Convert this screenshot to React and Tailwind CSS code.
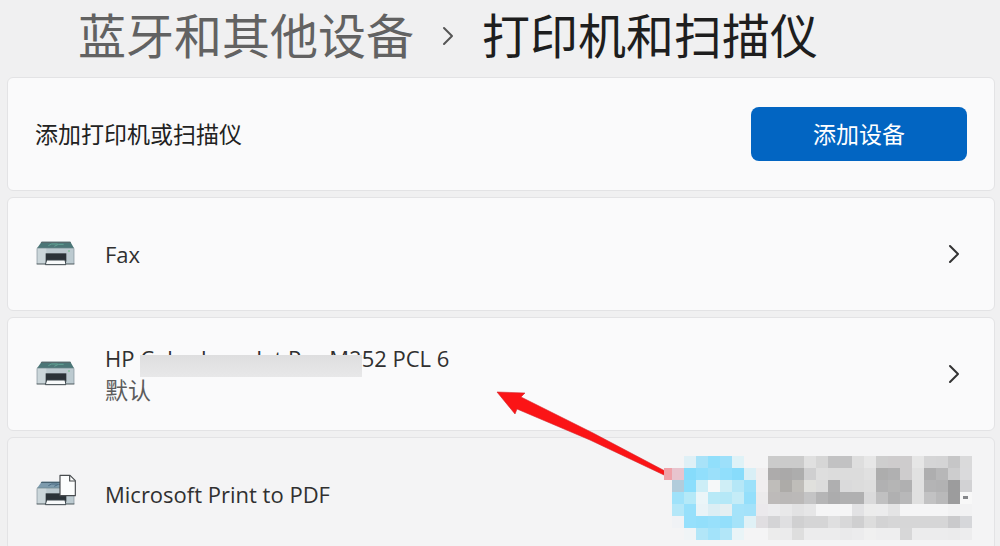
import React from 'react';

const devices = [
  { name: 'Fax' },
  { prefix: 'HP ', masked: 'Color LaserJet Pro M2', name: '52 PCL 6', status: '默认' },
  { name: 'Microsoft Print to PDF', document: true },
];

// 12px mosaic blocks, '' leaves a block empty
const mosaic = [
  ['', '#dff0f6', '#a8e2f8', '#91dffb', '#9de0fa', '#dff2f7', '', '', '#cbcbcb', '#cbcbcb', '#cbcbcb', '#e0e0e0', '#d6d6d6', '#c2c2c3', '#c2c2c3', '#dedede', '#e7e7e7', '#cecece', '#cecccd', '#cecccd', '#e6e6e6', '#d5d5d6', '#d4d4d5', '#c6c6c7', '#dadadb'],
  ['#e8c4ce', '#86dcfb', '#91dffc', '#9be0fa', '#91dffc', '#88dcfb', '#d9eff6', '#f0eeef', '#adabab', '#aaa9a9', '#adadad', '#cfcfd0', '#dedede', '#dcdcdc', '#dcdcdc', '#dcdcdc', '#e0e0e0', '#adadad', '#b0b0b1', '#cecccd', '#e1e1e1', '#aeaeaf', '#b7b7b8', '#cdcdce', '#dadadc'],
  ['#b2ccdb', '#8bdefc', '#cdeef7', '#f6f8f9', '#cfeef6', '#b5e7f7', '#9ce1fa', '#f0eeef', '#bfbdba', '#adaba8', '#bfbdb9', '#e0e0dd', '#dcdcdc', '#afafb0', '#dadadb', '#dcdcdc', '#dedede', '#b1b1b2', '#b5b5b5', '#b0b0b1', '#e0e0e0', '#b4b4b5', '#b2b2b3', '#9c9c9d', '#d2d2d4'],
  ['#9fe2fa', '#b5e9f8', '#ebf5f8', '#b8e9f7', '#b5e8f7', '#c5ecf7', '#94dffb', '#ecebec', '#bdbab9', '#bab8b7', '#bbb9b8', '#c4c4c5', '#b5b5b6', '#acacad', '#b0b0b1', '#b0b0b1', '#dadadb', '#c0c0c1', '#b0b0b1', '#b8b8b9', '#e0e0e0', '#c2c2c3', '#b9b9ba', '#9c9c9d', '#f8f8f8'],
  ['#b4e7f8', '#97e0fb', '#e9f3f7', '#dceef4', '#e5eff2', '#a5e3fa', '#a3e2fa', '#ebe9ec', '#ececee', '#e8e8e9', '#e2e2e3', '#e6e6e7', '#f5f5f6', '#f5f5f6', '#f5f5f6', '#e2e2e4', '#ececec', '#ececed', '#e4e4e5', '#f5f5f6', '#f5f5f6', '#f5f5f6', '#f5f5f6', '#f2f2f3', '#f2f2f3'],
  ['#f0f2f5', '#96e0fc', '#93dffb', '#98e0fb', '#93dffb', '#a5e3f9', '#e0f1f6', '#e0dee1', '#d4d4d6', '#dfdfe1', '#d0d0d1', '#d5d5d6', '#d5d5d6', '#dfdfe0', '#d8d8d9', '#cfcfd0', '#dddddd', '#d3d3d4', '#d6d6d7', '#d6d6d7', '#d6d6d7', '#d6d6d7', '#d6d6d7', '#cacacc', '#d6d7da'],
  ['', '#f0f4f6', '#b2e6f8', '#a3e3fa', '#b2e6f8', '#e9f4f7', '', '', '#ececec', '#ebebec', '#dedede', '#ececed', '#ececed', '#ececed', '#eaeaeb', '#ececed', '#f0f0f0', '#eeeeef', '#eeeeef', '#d7d7d8', '#ececed', '#ececed', '#ececed', '#ebebec', '#ededee'],
];

const Chevron = ({ className }) => (
  <svg
    viewBox="0 0 12 20"
    className={className}
    fill="none"
    stroke="currentColor"
    strokeWidth="2"
    strokeLinecap="round"
    strokeLinejoin="round"
    aria-hidden="true"
  >
    <path d="M2 2 L10 10 L2 18" />
  </svg>
);

const PrinterIcon = ({ document }) => (
  <svg viewBox="45 38 120 102" className="mb-2 h-[34px] w-10 shrink-0" aria-hidden="true">
    <path d="M62 64 H148 L159 84 H48 Z" fill={document ? '#7d9bad' : '#4b7677'} />
    <path d="M62 64 H148 L150 68 H59 Z" fill={document ? '#46606f' : '#56686b'} />
    <path
      d="M82 76 L92 71 H110 M100 78 L112 72 H128"
      stroke={document ? '#4a6b82' : '#62a294'}
      strokeWidth="3"
      fill="none"
    />
    <path d="M48 83 H159 V131 H48 Z" fill="#bccad0" />
    <path d="M48 83 H76 V131 H48 Z" fill="#cbd6da" />
    <path d="M48 83 H159" stroke="#6b828a" strokeWidth="2" />
    {!document && <circle cx="144" cy="92" r="2" fill="#4fbd66" />}
    <path d="M48 84 V131 M159 84 V131" stroke="#7f9097" strokeWidth="2" />
    <path d="M47 131 H74 M136 131 H160" stroke="#4c585d" strokeWidth="3" />
    <path d="M74 99 H136 V124 H74 Z" fill="#2b3338" />
    <path d="M77 119 H132 L135 133 H73 Z" fill="#f8fafb" stroke="#394348" strokeWidth="3" />
    {document && (
      <>
        <path
          d="M117 45 H147 L163 61 V106 H117 Z"
          fill="#fcfdfd"
          stroke="#484c4f"
          strokeWidth="3.5"
          strokeLinejoin="round"
        />
        <path d="M146 46 V62 H162" fill="none" stroke="#484c4f" strokeWidth="3.5" />
      </>
    )}
  </svg>
);

const DeviceRow = ({ device }) => (
  <li>
    <button
      type="button"
      className={`flex min-h-[114px] w-full items-center rounded-md border border-[#e3e3e5] px-7 text-left ${
        device.document ? 'bg-[#f4f4f5]' : 'bg-[#fafafb]'
      }`}
    >
      <PrinterIcon document={device.document} />
      <span className="ml-[29px] flex-1">
        <span className="block text-[22px] leading-8 text-[#303030]">
          {device.prefix}
          {device.masked && (
            <span className="relative">
              {device.masked}
              <span className="absolute inset-x-0 top-3 -bottom-1 bg-linear-to-b from-[#dededf] to-[#e8e8e9]" />
            </span>
          )}
          {device.name}
        </span>
        {device.status && (
          <span className="block text-[23px] leading-8 text-[#5c5c5c]">{device.status}</span>
        )}
      </span>
      {!device.document && (
        <span className="flex w-6 justify-center text-[#333333]">
          <Chevron className="h-5 w-3" />
        </span>
      )}
    </button>
  </li>
);

const Arrow = () => (
  <svg
    viewBox="0 0 180 90"
    className="pointer-events-none absolute top-[390px] left-[495px] h-[90px] w-[180px]"
    aria-hidden="true"
  >
    <path
      d="M2 2 L30 3 L26 7 L98 43 L170 81 L169 85 L95 50 L22 19 L20 24 Z"
      fill="#fb1416"
      stroke="#d3242a"
      strokeWidth="0.6"
    />
  </svg>
);

const Watermark = () => (
  <svg
    viewBox="0 0 320 84"
    className="pointer-events-none absolute top-[456px] left-[664px] h-[84px] w-80"
    shapeRendering="crispEdges"
    aria-hidden="true"
  >
    <rect x="0" y="12" width="8" height="12" fill="#efa1a8" />
    {mosaic.map((row, y) =>
      row.map((fill, x) =>
        fill ? (
          <rect key={`${x}-${y}`} x={8 + x * 12} y={y * 12} width="12" height="12" fill={fill} />
        ) : null
      )
    )}
    <rect x="299" y="40" width="5" height="3" fill="#85878a" />
  </svg>
);

const App = () => {
  return (
    <div className="relative h-screen overflow-hidden bg-[#f0f0f1] font-['Open_Sans','Noto_Sans_CJK_SC',sans-serif]">
      <header className="flex h-[77px] items-center px-[78px] pb-1.5">
        <nav className="flex items-center gap-7 text-5xl leading-none whitespace-nowrap">
          <a href="#devices" className="text-[#626262]">
            蓝牙和其他设备
          </a>
          <Chevron className="h-5 w-3 text-[#555555]" />
          <h1 className="text-[#1e1e1e]">打印机和扫描仪</h1>
        </nav>
      </header>

      <main className="flex flex-col gap-1.5 pr-[5px] pl-[7px]">
        <section className="flex min-h-[114px] items-center justify-between rounded-md border border-[#e3e3e5] bg-[#fafafb] px-[27px]">
          <h2 className="text-[23px] text-[#222222]">添加打印机或扫描仪</h2>
          <button
            type="button"
            className="h-[54px] w-[216px] rounded-lg bg-[#0265c2] text-[23px] text-white"
          >
            添加设备
          </button>
        </section>

        <ul className="flex flex-col gap-1.5">
          {devices.map((device) => (
            <DeviceRow key={device.name} device={device} />
          ))}
        </ul>
      </main>

      <Arrow />
      <Watermark />
    </div>
  );
};

export default App;
